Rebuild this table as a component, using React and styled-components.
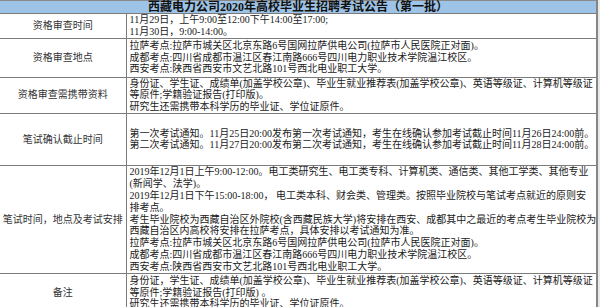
import React from 'react'
import styled, { createGlobalStyle } from 'styled-components'

const GlobalStyle = createGlobalStyle`
  html, body {
    margin: 0;
    padding: 0;
    background: #fff;
  }
  body {
    font-family: "Liberation Serif", "Noto Sans CJK SC", serif;
    color: #1a1a1a;
  }
`

const Page = styled.div`
  width: 600px;
  height: 307px;
  overflow: hidden;
  background: #e9e9e9;
`

const Sheet = styled.table`
  width: 598px;
  table-layout: fixed;
  border-collapse: collapse;
  background: #fff;
  border-right: 2px solid #858585;
  font-size: 10px;
  line-height: 11.8px;
`

const Title = styled.th`
  height: 12px;
  padding: 0;
  background: #9dc3e6;
  border-top: 1px solid #8a8a8a;
  border-bottom: 1px solid #7a7a7a;
  font-weight: bold;
  font-size: 12px;
  line-height: 12px;
  text-align: center;
  color: #111;
  white-space: nowrap;
`

const Row = styled.tr`
  height: ${p => p.$h}px;
`

const Label = styled.td`
  padding: 0;
  border: 1px solid #7c7c7c;
  border-left: none;
  text-align: center;
  vertical-align: middle;
  color: #333;
  white-space: nowrap;
  overflow: hidden;
`

const Content = styled.td`
  padding: 0 2px 0 3px;
  border: 1px solid #7c7c7c;
  vertical-align: middle;
  overflow: hidden;
`

const Line = styled.div`
  white-space: nowrap;
`

const rows = [
  {
    label: '资格审查时间',
    h: 24,
    lines: ['11月29日，上午9:00至12:00下午14:00至17:00;', '11月30日，9:00-14:00。'],
  },
  {
    label: '资格审查地点',
    h: 39,
    lines: [
      '拉萨考点:拉萨市城关区北京东路6号国网拉萨供电公司(拉萨市人民医院正对面)。',
      '成都考点:四川省成都市温江区春江南路666号四川电力职业技术学院温江校区。',
      '西安考点:陕西省西安市文艺北路101号西北电业职工大学。',
    ],
  },
  {
    label: '资格审查需携带资料',
    h: 33,
    lines: [
      '身份证、学生证、成绩单(加盖学校公章)、毕业生就业推荐表(加盖学校公章)、英语等级证、计算机等级证',
      '等原件;学籍验证报告(打印版)。',
      '研究生还需携带本科学历的毕业证、学位证原件。',
    ],
  },
  {
    label: '笔试确认截止时间',
    h: 52,
    lines: [
      '第一次考试通知。11月25日20:00发布第一次考试通知，考生在线确认参加考试截止时间11月26日24:00前。',
      '第二次考试通知。11月27日20:00发布第二次考试通知，考生在线确认参加考试截止时间11月28日24:00前。',
    ],
  },
  {
    label: '笔试时间，地点及考试安排',
    h: 108,
    lines: [
      '2019年12月1日上午9:00-12:00。电工类研究生、电工类专科、计算机类、通信类、其他工学类、其他专业',
      '(新闻学、法学)。',
      '2019年12月1日下午15:00-18:00， 电工类本科、财会类、管理类。按照毕业院校与笔试考点就近的原则安',
      '排考点。',
      '考生毕业院校为西藏自治区外院校(含西藏民族大学)将安排在西安、成都其中之最近的考点考生毕业院校为',
      '西藏自治区内高校将安排在拉萨考点，具体安排以考试通知为准。',
      '拉萨考点:拉萨市城关区北京东路6号国网拉萨供电公司(拉萨市人民医院正对面)。',
      '成都考点:四川省成都市温江区春江南路666号四川电力职业技术学院温江校区。',
      '西安考点:陕西省西安市文艺北路101号西北电业职工大学。',
    ],
  },
  {
    label: '备注',
    h: 38,
    lines: [
      '身份证，学生证、成绩单(加盖学校公章)、毕业生就业推荐表(加盖学校公章)、英语等级证、计算机等级证',
      '等原件;学籍验证报告(打印版) 。',
      '研究生还需携带本科学历的毕业证、学位证原件。',
    ],
  },
]

const App = () => {
  return (
    <Page>
      <GlobalStyle />
      <Sheet>
        <colgroup>
          <col style={{ width: 126 }} />
          <col />
        </colgroup>
        <tbody>
          <tr>
            <Title colSpan={2}>西藏电力公司2020年高校毕业生招聘考试公告（第一批）</Title>
          </tr>
          {rows.map(r => (
            <Row key={r.label} $h={r.h}>
              <Label>{r.label}</Label>
              <Content>
                {r.lines.map((l, i) => (
                  <Line key={i}>{l}</Line>
                ))}
              </Content>
            </Row>
          ))}
        </tbody>
      </Sheet>
    </Page>
  )
}

export default App
